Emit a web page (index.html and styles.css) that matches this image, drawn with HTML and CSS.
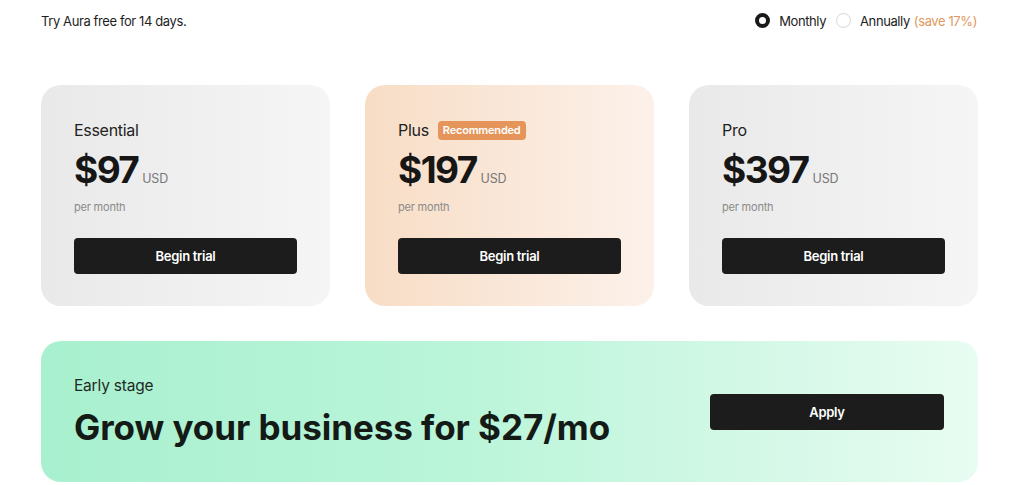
FILE: index.html
```html
<!DOCTYPE html>
<html lang="en">
<head>
<meta charset="utf-8">
<title>Aura pricing</title>
<link rel="stylesheet" href="styles.css">
</head>
<body>
<div class="page">
  <header class="topbar">
    <p class="trial-note">Try Aura free for 14 days.</p>
    <div class="billing">
      <label class="option"><span class="radio radio-on"></span>Monthly</label>
      <label class="option"><span class="radio"></span>Annually <span class="save">(save 17%)</span></label>
    </div>
  </header>

  <section class="plans">
    <article class="plan plan-grey">
      <div class="plan-name">Essential</div>
      <div class="price-row"><span class="price">$97</span><span class="currency">USD</span></div>
      <div class="period">per month</div>
      <button class="btn">Begin trial</button>
    </article>
    <article class="plan plan-peach">
      <div class="plan-name">Plus <span class="badge">Recommended</span></div>
      <div class="price-row"><span class="price">$197</span><span class="currency">USD</span></div>
      <div class="period">per month</div>
      <button class="btn">Begin trial</button>
    </article>
    <article class="plan plan-grey">
      <div class="plan-name">Pro</div>
      <div class="price-row"><span class="price">$397</span><span class="currency">USD</span></div>
      <div class="period">per month</div>
      <button class="btn">Begin trial</button>
    </article>
  </section>

  <section class="banner">
    <div class="banner-text">
      <div class="banner-label">Early stage</div>
      <h2 class="banner-title">Grow your business for $27/mo</h2>
    </div>
    <button class="btn btn-apply">Apply</button>
  </section>
</div>
</body>
</html>
```

FILE: styles.css
```css
* { box-sizing: border-box; }
html, body { margin: 0; padding: 0; background: #ffffff; }
body {
  font-family: Inter, "Noto Sans", "Liberation Sans", sans-serif;
  color: #1b1b1b;
}
.page {
  width: 937px;
  margin: 0 0 0 41px;
}
.topbar {
  height: 41px;
  display: flex;
  align-items: center;
  justify-content: space-between;
}
.trial-note {
  margin: 0;
  font-size: 13px;
  letter-spacing: -0.4px;
  color: #1e1e1e;
}
.billing {
  display: flex;
  align-items: center;
  gap: 10px;
  font-size: 13px;
  letter-spacing: -0.4px;
  color: #222;
  margin-right: 1px;
}
.option {
  display: flex;
  align-items: center;
  gap: 9px;
}
.radio {
  width: 15px;
  height: 15px;
  border-radius: 50%;
  border: 1px solid #d6d6d6;
  background: #fff;
  display: inline-block;
}
.radio-on {
  border: 4.5px solid #1a1a1a;
}
.save { color: #e0995e; margin-left: -5px; }

.plans {
  margin-top: 44px;
  display: grid;
  grid-template-columns: repeat(3, 289px);
  gap: 35px;
}
.plan {
  height: 221px;
  border-radius: 20px;
  padding: 35px 33px 32px 33px;
  display: flex;
  flex-direction: column;
}
.plan-grey {
  background: linear-gradient(90deg, #e9e9e9 0%, #f0f0f0 55%, #f5f5f5 100%);
}
.plan-peach {
  background: linear-gradient(90deg, #f8ddc5 0%, #fae8da 55%, #fcf1ea 100%);
}
.plan-name {
  display: flex;
  align-items: center;
  gap: 9px;
  height: 20px;
  font-size: 16px;
  letter-spacing: -0.3px;
  color: #222;
}
.badge {
  background: #e6955a;
  color: #fff;
  font-size: 11px;
  font-weight: 600;
  letter-spacing: -0.2px;
  border-radius: 4px;
  padding: 0 5px;
  height: 19px;
  line-height: 19px;
}
.price-row {
  margin-top: 10px;
  display: flex;
  align-items: baseline;
  gap: 4px;
  height: 40px;
}
.price {
  font-size: 37px;
  font-weight: 700;
  letter-spacing: -1.6px;
  line-height: 40px;
  color: #161616;
}
.currency {
  font-size: 12.5px;
  color: #777;
  letter-spacing: -0.2px;
}
.period {
  margin-top: 10px;
  font-size: 11px;
  line-height: 14px;
  color: #8a8a8a;
  letter-spacing: -0.2px;
}
.btn {
  margin-top: 24px;
  height: 36px;
  width: 223px;
  border: none;
  border-radius: 4px;
  background: #1c1c1c;
  color: #fff;
  font-family: inherit;
  font-size: 13px;
  font-weight: 600;
  letter-spacing: -0.3px;
}

.banner {
  margin-top: 35px;
  height: 141px;
  border-radius: 20px;
  background: linear-gradient(90deg, #a8f0cf 0%, #baf5d9 45%, #d3f8e6 75%, #e8fcf2 100%);
  display: flex;
  align-items: center;
  justify-content: space-between;
  padding: 0 34px 0 33px;
}
.banner-label {
  font-size: 15.5px;
  letter-spacing: -0.2px;
  color: #1f2a24;
  line-height: 20px;
}
.banner-title {
  margin: 11px 0 0 0;
  font-size: 35px;
  line-height: 40px;
  font-weight: 700;
  letter-spacing: -0.05px;
  color: #141a16;
}
.btn-apply {
  margin-top: 0;
  width: 234px;
}
```
